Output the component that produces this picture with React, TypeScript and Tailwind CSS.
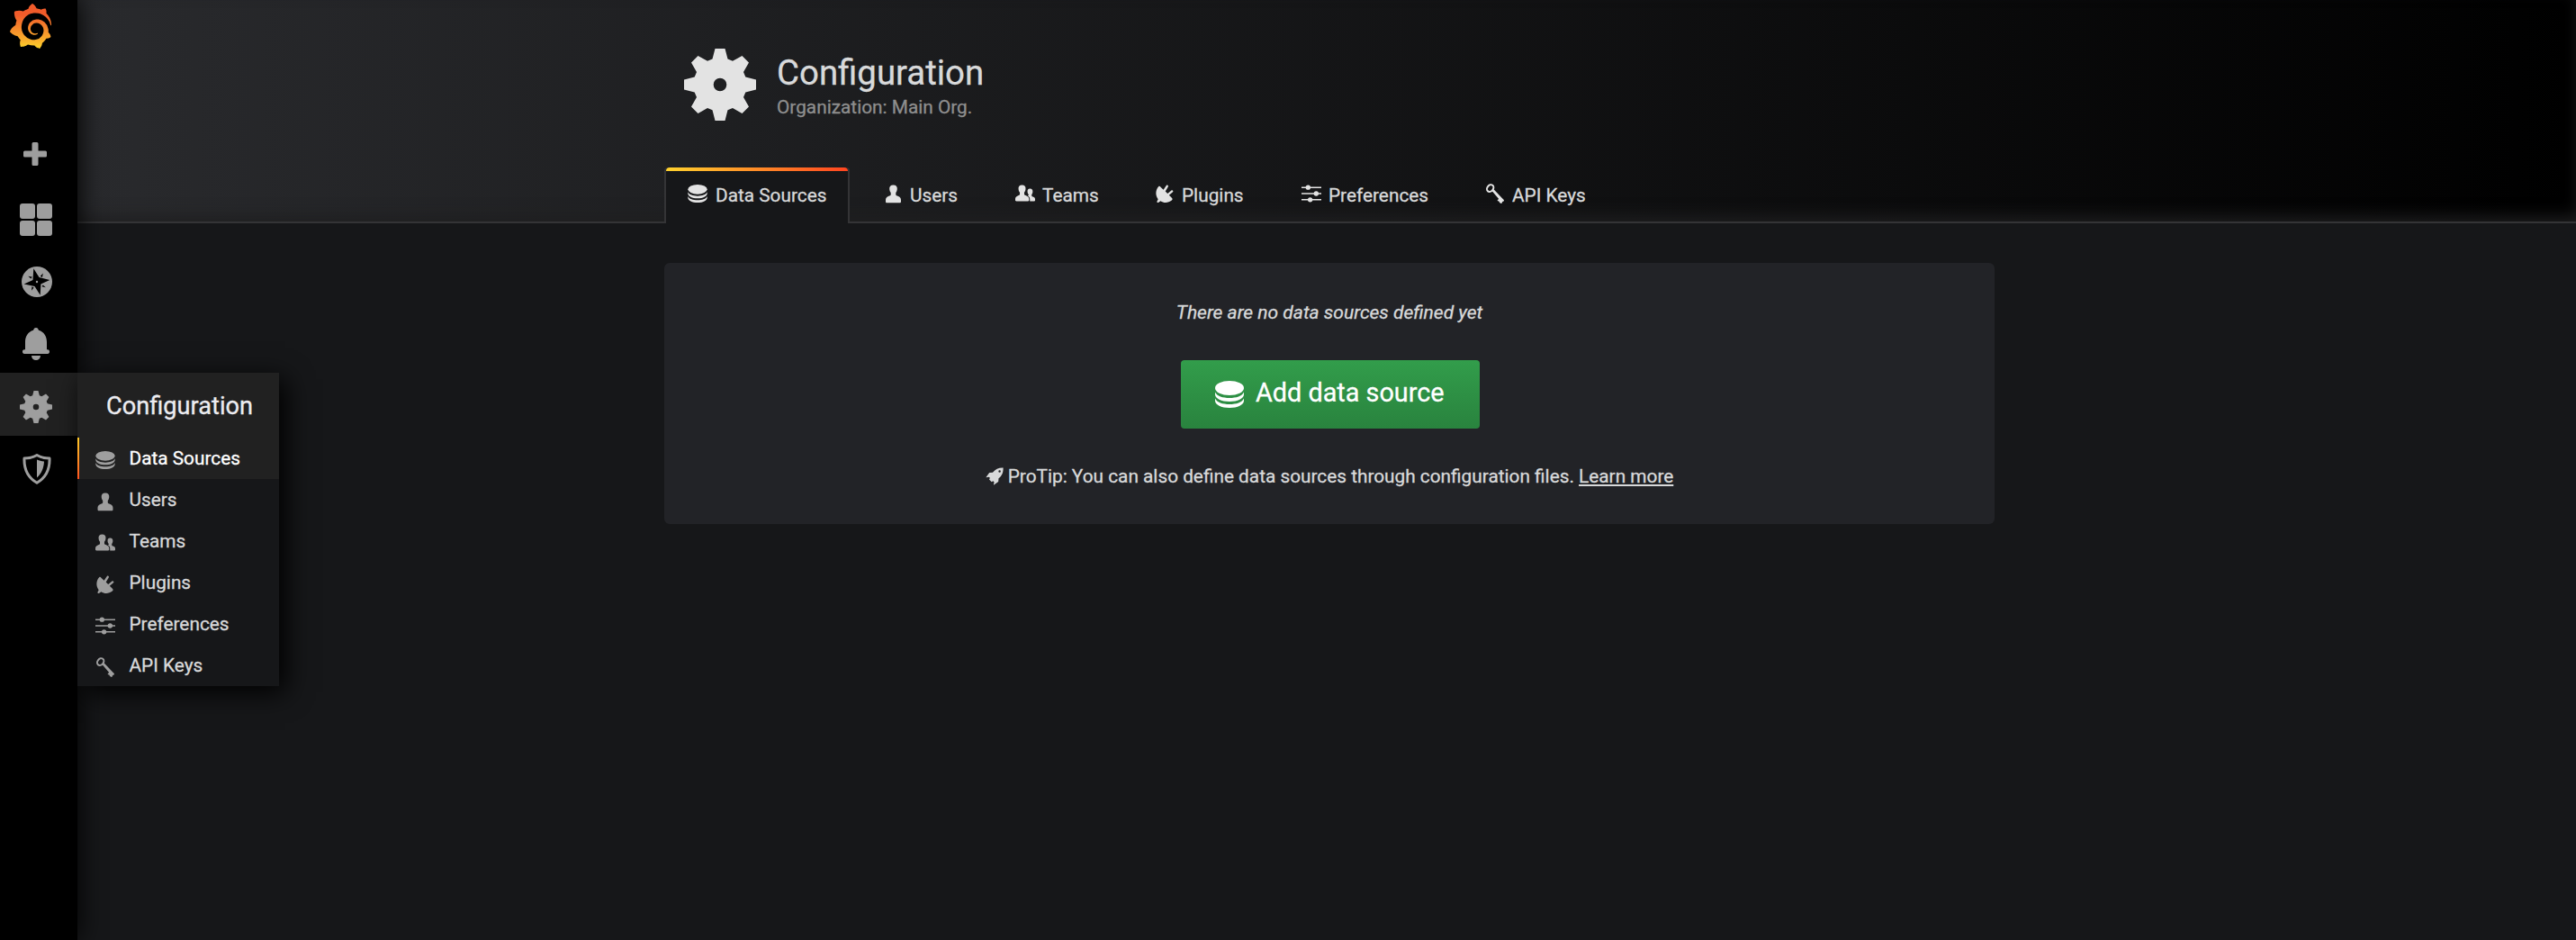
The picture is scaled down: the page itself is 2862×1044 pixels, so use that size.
import React from "react";
import { SiGrafana } from "react-icons/si";

const Svg = ({ box = "0 0 24 24", className, children }: { box?: string; className: string; children: React.ReactNode }) => (
  <svg viewBox={box} className={className} fill="currentColor">{children}</svg>
);

const Database = ({ className }: { className: string }) => (
  <Svg box="0 0 32 30" className={className}>
    <ellipse cx="16" cy="8" rx="16" ry="8" />
    <path d="M0 12.500C2 17 8.500 19 16 19s14-2 16-6.500v2.500c0 4.500-7 8-16 8S0 19.500 0 15z" />
    <path d="M0 19.500C2 24 8.500 26 16 26s14-2 16-6.500V22c0 4.500-7 8-16 8S0 26.500 0 22z" />
  </Svg>
);
const User = ({ className }: { className: string }) => (
  <Svg className={className}>
    <path d="M12 .500c3.600 0 5.200 2 4.900 5.300-.2 2.200-.9 3.600-1.700 4.600v2.500c0 .8 1.200 1.200 3.100 2 2.500 1 3.400 2.400 3.400 4.700v2c0 .9-.6 1.500-1.500 1.500H3.800c-.9 0-1.500-.6-1.500-1.500v-2c0-2.300.9-3.700 3.400-4.700 1.900-.8 3.100-1.200 3.100-2v-2.500c-.8-1-1.500-2.400-1.700-4.600C6.800 2.500 8.400.500 12 .500z" />
  </Svg>
);
const Users = ({ className }: { className: string }) => (
  <Svg className={className}>
    <path d="M17.800 6c2.500 0 3.500 1.500 3.300 3.800-.1 1.600-.6 2.500-1.200 3.200v1.700c0 .6 1 .9 2.200 1.400 1.400.6 1.900 1.500 1.900 3v1c0 .8-.4 1.200-1.100 1.200h-5.200v-2.500c0-2-.8-3.200-2.500-4.200.6-.3.900-.5.900-.8V13c-.6-.7-1.200-1.600-1.300-3.200C14.600 7.500 15.400 6 17.800 6z" />
    <path d="M8.200 1.700c3.200 0 4.600 1.800 4.300 4.900-.2 2-.8 3.200-1.600 4.100v2.200c0 .8 1.200 1.200 2.800 1.900 2.200.9 3 2.200 3 4.200v1c0 .9-.5 1.300-1.300 1.300H1.300c-.8 0-1.300-.4-1.300-1.300v-1c0-2 .8-3.300 3-4.200 1.500-.7 2.500-1.100 2.500-1.900v-2.200c-.8-.9-1.400-2.100-1.600-4.100-.3-3.100 1.100-4.900 4.300-4.900z" />
  </Svg>
);
const Plug = ({ className }: { className: string }) => (
  <Svg className={className}>
    <path d="M4.500 3.500C5.500 2.300 6.500 3.200 7 4l3.500 3.400L14 2.200c1-1.300 3 .1 2.100 1.500l-3.300 5.600 2.700 2.700 4.600-3.800c1.300-1 3 .9 1.700 2L17.300 14l3 3c1.200 1.200 1.600 2 .2 3.200-4 3.300-9.500 3.600-13.500.8l-2.300 1.700c-1.200.9-2.700-.6-1.800-1.800L4 18.800C.5 14 .7 8 4.500 3.500z" />
  </Svg>
);
const Sliders = ({ className }: { className: string }) => (
  <Svg className={className}>
    <path d="M0 3.700h24v1.700H0zM0 11.100h24v1.700H0zM0 18.500h24v1.700H0z" />
    <circle cx="8" cy="4.500" r="2.900" /><circle cx="17.800" cy="12" r="2.900" /><circle cx="10.500" cy="19.400" r="2.900" />
  </Svg>
);
const Key = ({ className }: { className: string }) => (
  <Svg className={className}>
    <ellipse cx="6.200" cy="5.500" rx="3.600" ry="4.600" transform="rotate(38 6.200 5.500)" fill="none" stroke="currentColor" strokeWidth="2.200" />
    <path d="M8.200 8.600l2.200-1.900 10.900 11.500 1.700 1.800-.8 1.500-1.700.2.500 1.300-1.600 1-1.900-1-.8-1.700-2-.6 1.700-2.300z" />
  </Svg>
);
const Gear = ({ className }: { className: string }) => (
  <Svg box="0 0 80 80" className={className}>
    <path fillRule="evenodd" d="M34.500 0h11l3 11.500 5.500 2.300L64.500 8l7.500 7.500-6 10.500 2.300 5.500L80 34.500v11l-11.700 3L66 54l6 10.500-7.500 7.500L54 66l-5.500 2.300L45.500 80h-11l-3-11.700L26 66l-10.500 6L8 64.500 14 54l-2.300-5.500L0 45.500v-11l11.700-3L14 26 8 15.500 15.500 8 26 13.800l5.500-2.300zM40 32.700a7.300 7.300 0 100 14.600 7.300 7.300 0 000-14.600z" />
  </Svg>
);
const Rocket = ({ className }: { className: string }) => (
  <Svg className={className}>
    <path fillRule="evenodd" d="M23.500.5c-6-.2-10.300 1.700-14 6.300l-4.500.4L.5 13.500l4.300-.7 1 1.500-1 1.800 3.300 3.300 1.800-1 1.500 1-.7 4.300 6.300-4.500.4-4.500c4.600-3.700 6.400-8.200 6.100-14.200zM18.700 3.800a1.500 1.500 0 110 3 1.500 1.500 0 010-3z" />
  </Svg>
);
const Logo = () => (
  <>
    <svg className="absolute size-0">
      <defs>
        <linearGradient id="logo" x1="0" y1="1" x2="0" y2="0">
          <stop offset="0" stopColor="#fcd52a" /><stop offset=".15" stopColor="#fbb62c" /><stop offset=".75" stopColor="#f15b2a" />
        </linearGradient>
      </defs>
    </svg>
    <SiGrafana fill="url(#logo)" className="size-[50px]" />
  </>
);
const Apps = () => (
  <Svg box="0 0 36 36" className="size-9">
    <rect width="17" height="17" rx="3" /><rect x="19" width="17" height="17" rx="3" />
    <rect y="19" width="17" height="17" rx="3" /><rect x="19" y="19" width="17" height="17" rx="3" />
  </Svg>
);
const Compass = () => (
  <Svg box="0 0 34 34" className="size-[34px]">
    <circle cx="17" cy="17" r="17" />
    <g fill="#000">
      <path d="M13.300 2.300l6.200 9.800L31.300 15l-9.900 4.600-.7 12.100-6.200-9.800L2.700 19.500l9.800-4.600z" />
      <path d="M20.800 10.700l3-3.200-.8 4.500zM7.300 10.700l4.400.8-1.300 2zM26.800 23.300l-4.300-1 1.200-1.900zM11 26.800l.5-4.500 2 1.200z" />
    </g>
    <circle cx="17" cy="17" r="1.200" />
  </Svg>
);
const Bell = () => (
  <Svg box="0 0 30 36" className="h-9 w-[30px]">
    <path d="M15 0c1.800 0 2.600 1.200 2.900 2.700C24 4.500 27 9.500 27 16v8.300h1c1.300 0 2 1 2 2.300s-.7 2.400-2 2.400H2c-1.300 0-2-1-2-2.400s.7-2.300 2-2.300h1V16C3 9.500 6 4.500 12.100 2.700 12.400 1.200 13.200 0 15 0zM10 31h10c-.2 3.200-2.200 5-5 5s-4.800-1.800-5-5z" />
  </Svg>
);
const Shield = () => (
  <Svg box="0 0 32 34" className="h-[34px] w-8">
    <path fill="none" stroke="currentColor" strokeWidth="3" strokeLinejoin="round" d="M16 1.500C20.500 4 25 5 30 5c.5 12-4 21.500-14 27.300C6 26.500 1.500 17 2 5c5 0 9.500-1 14-3.500z" />
    <path d="M16 6.500c2.600 1.100 5 1.700 8 2-.4 7.500-2.800 13.300-8 18z" />
  </Svg>
);

const items = [
  { label: "Data Sources", Icon: Database, tab: "w-[206px] pl-6", icon: "h-[20px] w-[22px] -mt-1", gap: "gap-[9px]", menu: "h-[20px]" },
  { label: "Users", Icon: User, tab: "w-[156px] pl-[38px]", icon: "size-[21px] -mt-1", gap: "gap-[8px]", menu: "h-[21px]" },
  { label: "Teams", Icon: Users, tab: "w-[156px] pl-[28px]", icon: "size-[22px] -mt-1", gap: "gap-[8px]", menu: "h-[22px]" },
  { label: "Plugins", Icon: Plug, tab: "w-[161px] pl-[27px]", icon: "size-[22px] -mt-1", gap: "gap-[8px]", menu: "h-[22px]" },
  { label: "Preferences", Icon: Sliders, tab: "w-[205px] pl-[29px]", icon: "size-[22px] -mt-1", gap: "gap-[8px]", menu: "h-[22px]" },
  { label: "API Keys", Icon: Key, tab: "w-[150px] pl-[28px]", icon: "size-[22px] -mt-1", gap: "gap-[8px]", menu: "h-[22px]" },
];

const SideMenu = () => (
  <nav className="relative z-20 flex h-full w-[86px] shrink-0 flex-col bg-black text-[#9e9e9e] shadow-[0_0_30px_black]">
    <div className="h-[136px] pl-[9px] pt-1"><Logo /></div>
    <div className="flex h-[70px] items-center pl-[26px]">
      <Svg box="0 0 26 26" className="size-[26px]"><path d="M11 0h4q1.500 0 1.500 1.500v8h8q1.500 0 1.500 1.500v4q0 1.500-1.500 1.500h-8v8q0 1.500-1.500 1.500h-4q-1.500 0-1.500-1.500v-8h-8Q0 16.500 0 15v-4q0-1.500 1.500-1.500h8v-8Q9.500 0 11 0z" /></Svg>
    </div>
    <div className="flex h-[70px] items-center pl-[22px] pt-1.5"><Apps /></div>
    <div className="flex h-[70px] items-center pl-6 pt-1"><Compass /></div>
    <div className="flex h-[68px] items-center pl-[25px] pt-1"><Bell /></div>
    <div className="relative flex h-[70px] items-center bg-[#212121] pl-[22px] pt-1.5">
      <Gear className="size-9" />
      <div className="absolute left-[86px] top-0 h-[348px] w-[224px] bg-[#161719] shadow-[7px_7px_28px_black]">
        <div className="h-[72px] bg-[#212121] pl-8 pt-[17px] text-[27.200px] leading-[40px] text-[#ececf0]">Configuration</div>
        {items.map(({ label, Icon, menu }, i) => (
          <div key={label} className={i === 0 ? "relative flex h-[46px] items-center bg-[#212121] text-white" : "flex h-[46px] items-center text-[#d8d9da]"}>
            {i === 0 && <span className="absolute left-0 top-0 h-full w-0.5 bg-linear-to-b from-[#ffc827] to-[#ff4f1f]" />}
            <Icon className={`${menu} ml-5 mt-1 w-[22px] shrink-0 text-[#9e9e9e]`} />
            <span className="ml-[15.500px] leading-[46px]">{label}</span>
          </div>
        ))}
      </div>
    </div>
    <div className="flex h-[70px] items-center pl-[25px] pt-1"><Shield /></div>
  </nav>
);

export default function App() {
  return (
    <div className="flex h-[1044px] w-[2862px] overflow-hidden bg-[#161719] font-[Roboto,sans-serif] text-[20.800px] text-[#d8d9da] [-webkit-text-stroke:0.3px]">
      <SideMenu />
      <main className="min-w-0 flex-1">
        <header className="flex h-[248px] flex-col justify-between border-b-2 border-[#343436] bg-[linear-gradient(90deg,#292a2d,#000)] pl-[652px] shadow-[inset_0_-9px_18px_-4px_#1f1f20]">
          <div className="flex items-start pl-[22px] pt-[54px]">
            <Gear className="size-20 text-[#e3e3e3]" />
            <div className="ml-[23px]">
              <h1 className="mt-[2px] text-[38.400px] leading-[50px]">Configuration</h1>
              <p className="leading-[26px] text-[#8e8e8e]">Organization: Main Org.</p>
            </div>
          </div>
          <div className="-mb-0.5 flex h-[62px]">
            {items.map(({ label, Icon, tab, icon, gap }, i) => (
              <div key={label} className={`${tab} ${gap} ${i === 0 ? "relative border-x-2 border-[#343436] bg-[#161719] rounded-t" : ""} flex shrink-0 items-center`}>
                {i === 0 && <span className="absolute inset-x-0 top-0 h-1 rounded-t bg-[linear-gradient(90deg,#ffd22e,#ff4520)]" />}
                <Icon className={`${icon} shrink-0 text-[#e3e3e3]`} />
                <span className="pt-px">{label}</span>
              </div>
            ))}
          </div>
        </header>
        <section className="ml-[652px] mt-11 flex h-[290px] w-[1478px] flex-col items-center rounded-md bg-[#222327]">
          <p className="mt-10 text-[21px] italic leading-[30px]">There are no data sources defined yet</p>
          <button className="ml-0.5 mt-[38px] flex h-[76px] w-[332px] items-center rounded bg-[linear-gradient(180deg,#329d4b,#29833e)] pl-[38px] text-[28.800px] text-white">
            <Database className="h-[30px] w-8" />
            <span className="-mt-0.5 ml-[13px]">Add data source</span>
          </button>
          <p className="mt-[38px] flex items-center leading-[30px]">
            <Rocket className="mr-[5px] size-5" />
            <span>ProTip: You can also define data sources through configuration files. <a className="underline decoration-2 underline-offset-2">Learn more</a></span>
          </p>
        </section>
      </main>
    </div>
  );
}
